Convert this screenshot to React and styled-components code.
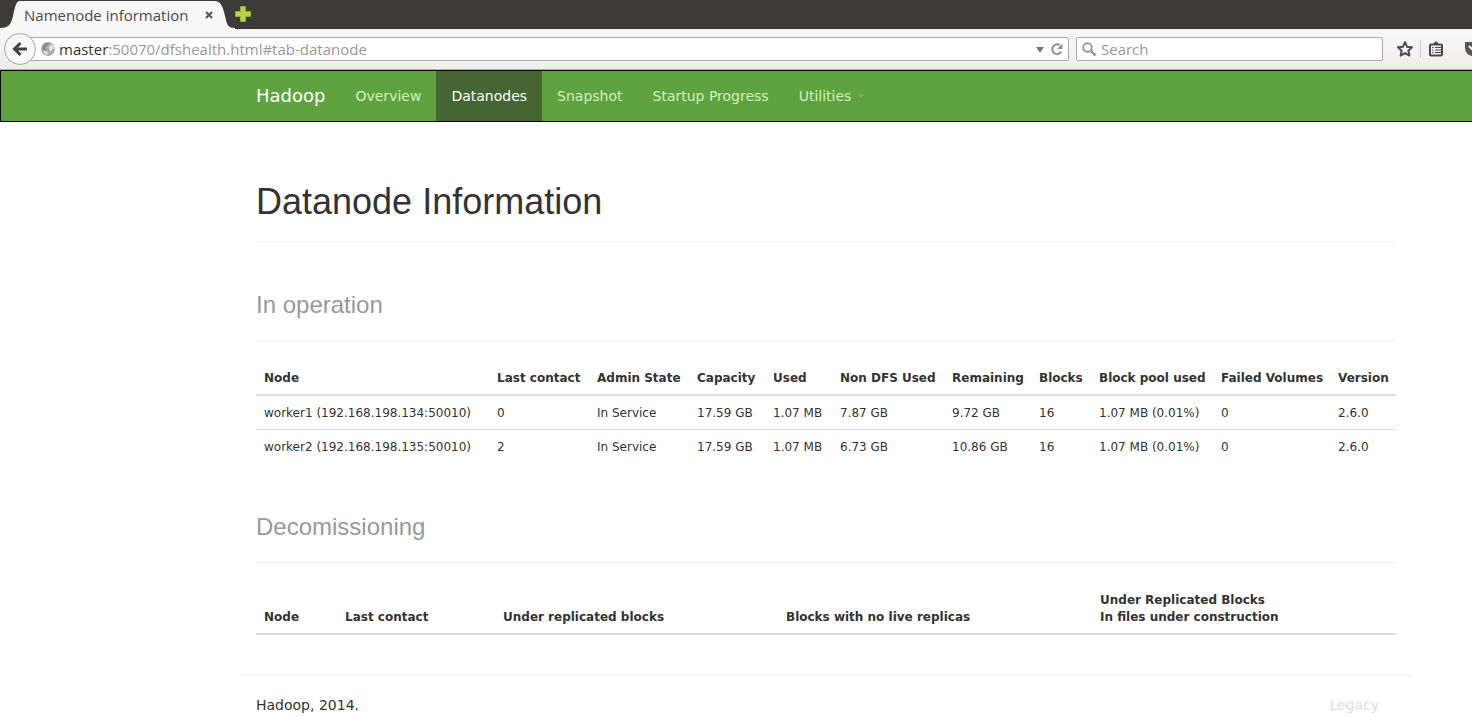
import React from "react";
import styled, { createGlobalStyle } from "styled-components";

const GlobalStyle = createGlobalStyle`
  *, *::before, *::after { box-sizing: border-box; }
  body {
    margin: 0;
    background: #fff;
    color: #333;
    font: 14px/20px "DejaVu Sans", sans-serif;
  }
  button { font: inherit; border: 0; background: none; padding: 0; cursor: pointer; }
  a { text-decoration: none; }
`;

const chromeFont = `"Open Sans", "Noto Sans", sans-serif`;

/* Browser window */
const Chrome = styled.div`
  font-family: ${chromeFont};
  overflow: hidden;
`;

const TabStrip = styled.div`
  display: flex;
  align-items: flex-end;
  height: 29px;
  background: #3c3b37;
  border-bottom: 1px solid #33302c;
`;

const TabEdge = styled.svg`
  flex: none;
  display: block;
  width: 20px;
  height: 29px;
  margin-bottom: -1px;
`;

const Tab = styled.div`
  flex: none;
  display: flex;
  align-items: center;
  justify-content: space-between;
  width: 195px;
  height: 28px;
  margin-bottom: -1px;
  padding-left: 4px;
  background: #f8f7f7;
  color: #4c4c4c;
  font-size: 15px;
  line-height: 28px;
  white-space: nowrap;
`;

const IconButton = styled.button`
  flex: none;
  display: flex;
  align-items: center;
  justify-content: center;
  width: ${(p) => p.$w || 16}px;
  height: ${(p) => p.$h || 16}px;
`;

const NewTab = styled(IconButton)`
  align-self: center;
`;

const Toolbar = styled.div`
  display: flex;
  align-items: center;
  height: 41px;
  padding-left: 4px;
  background: linear-gradient(#f8f7f7, #f0eeed);
  border-bottom: 1px solid #b3afa9;
`;

const BackButton = styled.button`
  position: relative;
  flex: none;
  display: flex;
  align-items: center;
  justify-content: center;
  width: 32px;
  height: 32px;
  border: 1px solid #a5a5a5;
  border-radius: 50%;
  background: #f9f8f8;
`;

const Field = styled.label`
  display: flex;
  align-items: center;
  height: 24px;
  border: 1px solid #aaa;
  border-radius: 2px;
  background: #fff;
`;

const AddressField = styled(Field)`
  flex: 1 1 0;
  margin-left: -8px;
  padding: 0 4px 0 12px;
  gap: 4px;
`;

const SearchField = styled(Field)`
  flex: 0 1 307px;
  margin-left: 7px;
  padding: 0 5px;
  gap: 4px;
`;

const Address = styled.a`
  flex: 1;
  color: #999;
  font-size: 15px;
  line-height: 22px;
  white-space: nowrap;
`;

const Host = styled.span`
  color: #333;
`;

const SearchInput = styled.input`
  flex: 1;
  min-width: 0;
  border: 0;
  padding: 0;
  outline: 0;
  background: none;
  font: 15px/22px ${chromeFont};
  &::placeholder { color: #999; opacity: 1; }
`;

const ToolbarIcons = styled.div`
  flex: none;
  display: flex;
  align-items: center;
  width: 89px;
  padding-left: 13px;
  overflow: hidden;
`;

const Separator = styled.span`
  flex: none;
  width: 1px;
  height: 18px;
  margin: 0 7px 0 6px;
  background: #ccc;
`;

const PocketButton = styled(IconButton)`
  margin-left: 21px;
`;

/* Site navigation */
const Navbar = styled.nav`
  display: flex;
  height: 52px;
  padding-left: 240px;
  border: 1px solid #080808;
  border-right: 0;
  background: #5fa33e;
`;

const Brand = styled.a`
  padding: 15px 15px;
  color: #fff;
  font-size: 18px;
`;

const NavList = styled.ul`
  display: flex;
  margin: 0;
  padding: 0;
  list-style: none;
`;

const NavLink = styled.a`
  display: flex;
  align-items: center;
  gap: 6px;
  height: 50px;
  padding: 0 15px;
  color: ${(p) => (p.$active ? "#fff" : "#d2f0be")};
  background: ${(p) => (p.$active ? "#446633" : "transparent")};
`;

const Caret = styled.span`
  border: 4px solid transparent;
  border-top-color: #8a9c7c;
  border-bottom: 0;
`;

/* Page content */
const Container = styled.div`
  max-width: 1411px;
  padding-left: 241px;
`;

const Main = styled.main`
  padding: 60px 15px 0;
`;

const headingFont = `"Liberation Sans", Arial, sans-serif`;

const headingStyle = `
  margin: 0;
  padding-bottom: 19px;
  border-bottom: 1px solid #eee;
  font: 400 36px/40px ${headingFont};
`;

const PageTitle = styled.h1`
  ${headingStyle}
`;

const SectionTitle = styled.h2`
  ${headingStyle}
  small { color: #999; font-size: 24px; line-height: 1; }
`;

const Section = styled.section`
  margin-top: 39px;
  & + & { margin-top: 40px; }
`;

const Table = styled.table`
  width: 100%;
  margin-top: 20px;
  table-layout: fixed;
  border-spacing: 0;
  font-size: 12px;
  line-height: 17px;
  th, td {
    padding: 9px 8px 7px;
    text-align: left;
    white-space: nowrap;
  }
  th {
    vertical-align: bottom;
    border-bottom: 2px solid #ddd;
  }
  tr + tr td { border-top: 1px solid #ddd; }
`;

const Footer = styled.footer`
  display: flex;
  justify-content: space-between;
  margin-top: 40px;
  padding: 19px 32px 0 15px;
  border-top: 1px solid #eee;
`;

const LegacyLink = styled.a`
  color: #ddd;
`;

const navItems = ["Overview", "Datanodes", "Snapshot", "Startup Progress", "Utilities"];

const operationColumns = [
  ["Node", 233],
  ["Last contact", 100],
  ["Admin State", 100],
  ["Capacity", 76],
  ["Used", 67],
  ["Non DFS Used", 112],
  ["Remaining", 87],
  ["Blocks", 60],
  ["Block pool used", 122],
  ["Failed Volumes", 117],
  ["Version", 66],
];

const operationRows = [
  ["worker1 (192.168.198.134:50010)", "0", "In Service", "17.59 GB", "1.07 MB", "7.87 GB", "9.72 GB", "16", "1.07 MB (0.01%)", "0", "2.6.0"],
  ["worker2 (192.168.198.135:50010)", "2", "In Service", "17.59 GB", "1.07 MB", "6.73 GB", "10.86 GB", "16", "1.07 MB (0.01%)", "0", "2.6.0"],
];

const decommissionColumns = [
  ["Node", 81],
  ["Last contact", 158],
  ["Under replicated blocks", 283],
  ["Blocks with no live replicas", 314],
  [<>Under Replicated Blocks<br />In files under construction</>, 304],
];

function DataTable({ columns, rows = [] }) {
  return (
    <Table>
      <colgroup>
        {columns.map(([, width], i) => <col key={i} width={width} />)}
      </colgroup>
      <thead>
        <tr>{columns.map(([label], i) => <th key={i} scope="col">{label}</th>)}</tr>
      </thead>
      <tbody>
        {rows.map((row) => (
          <tr key={row[0]}>{row.map((cell, i) => <td key={i}>{cell}</td>)}</tr>
        ))}
      </tbody>
    </Table>
  );
}

function BrowserChrome() {
  return (
    <Chrome>
      <TabStrip>
        <TabEdge viewBox="0 0 20 29">
          <path d="M0 29V28C8 28 11 25 13 16C15 7 16 1 20 1V29Z" fill="#f8f7f7" />
        </TabEdge>
        <Tab>
          <span>Namenode information</span>
          <IconButton aria-label="Close tab" $w={12}>
            <svg width="8" height="8" viewBox="0 0 8 8">
              <path d="M1 1L7 7M7 1L1 7" stroke="#555" strokeWidth="2" />
            </svg>
          </IconButton>
        </Tab>
        <TabEdge viewBox="0 0 20 29">
          <path d="M20 29V28C13 28 12 25 10 16C8 6 5 1 0 1V29Z" fill="#f8f7f7" />
        </TabEdge>
        <NewTab aria-label="Open a new tab">
          <svg width="16" height="16" viewBox="0 0 16 16">
            <path d="M5.5 .5H10.500V5.500H15.500V10.500H10.500V15.500H5.500V10.500H.5V5.500H5.500Z" fill="#b5d44c" stroke="#8fb030" />
          </svg>
        </NewTab>
      </TabStrip>
      <Toolbar>
        <BackButton aria-label="Back">
          <svg width="16" height="16" viewBox="0 0 16 16">
            <path d="M8.500 2L2.500 8L8.500 14M3 8H15" fill="none" stroke="#444" strokeWidth="3" />
          </svg>
        </BackButton>
        <AddressField as="div">
          <svg width="14" height="14" viewBox="0 0 14 14">
            <circle cx="7" cy="7" r="7" fill="#ababab" />
            <path d="M1 5L4 1L8 1L6 4L4 5L6 8L5 9L2 8Z" fill="#8d8d8d" />
            <path d="M8 4L12 2.500L13.500 7L11 7L10 10L8 7Z" fill="#e4e4e4" />
            <path d="M2 9L6 9L7 12L5 13Z" fill="#e0e0e0" />
          </svg>
          <Address href="#tab-datanode"><Host>master</Host>:50070/dfshealth.html#tab-datanode</Address>
          <IconButton aria-label="Show history" $w={12}>
            <svg width="8" height="8" viewBox="0 0 8 8"><path d="M0 2H8L4 8Z" fill="#777" /></svg>
          </IconButton>
          <IconButton aria-label="Reload" $w={14}>
            <svg width="12" height="12" viewBox="0 0 12 12">
              <path d="M10.300 8.500A4.800 4.800 0 1 1 8.800 2.200" fill="none" stroke="#8494a0" strokeWidth="2" />
              <path d="M11.500 .5V6H6Z" fill="#8494a0" />
            </svg>
          </IconButton>
        </AddressField>
        <SearchField>
          <svg width="15" height="15" viewBox="0 0 15 15">
            <circle cx="5.500" cy="5.500" r="4.300" fill="none" stroke="#999" strokeWidth="2" />
            <path d="M9 9L13.500 13.500" stroke="#999" strokeWidth="2.500" />
          </svg>
          <SearchInput type="search" placeholder="Search" aria-label="Search" />
        </SearchField>
        <ToolbarIcons>
          <IconButton aria-label="Bookmark this page" $w={18}>
            <svg width="18" height="18" viewBox="0 0 18 18">
              <path d="M9 2.200L11.100 6.800L16 7.300L12.400 10.700L13.400 15.600L9 13.100L4.600 15.600L5.600 10.700L2 7.300L6.900 6.800Z" fill="none" stroke="#4a4a4a" strokeWidth="2" strokeLinejoin="round" />
            </svg>
          </IconButton>
          <Separator />
          <IconButton aria-label="Show bookmarks">
            <svg width="16" height="16" viewBox="0 0 16 16">
              <rect x="2" y="3.500" width="12" height="11" rx="1" fill="none" stroke="#4a4a4a" strokeWidth="2" />
              <path d="M5 3L8 0L11 3Z" fill="#4a4a4a" />
              <path d="M4 6.500H5.500M7 6.500H13M4 9H5.500M7 9H13M4 11.500H5.500M7 11.500H13" stroke="#4a4a4a" />
            </svg>
          </IconButton>
          <PocketButton aria-label="Save to Pocket">
            <svg width="16" height="16" viewBox="0 0 16 16">
              <path d="M0 2Q0 1 1 1H15Q16 1 16 2V7A8 8 0 0 1 0 7Z" fill="#555" />
              <path d="M4 5L8 9L12 5" fill="none" stroke="#fff" strokeWidth="2" />
            </svg>
          </PocketButton>
        </ToolbarIcons>
      </Toolbar>
    </Chrome>
  );
}

export default function App() {
  return (
    <>
      <GlobalStyle />
      <BrowserChrome />
      <Navbar>
        <Brand href="#">Hadoop</Brand>
        <NavList>
          {navItems.map((item) => (
            <li key={item}>
              <NavLink href="#" $active={item === "Datanodes"}>
                {item}
                {item === "Utilities" && <Caret />}
              </NavLink>
            </li>
          ))}
        </NavList>
      </Navbar>
      <Container>
        <Main>
          <PageTitle>Datanode Information</PageTitle>
          <Section>
            <SectionTitle><small>In operation</small></SectionTitle>
            <DataTable columns={operationColumns} rows={operationRows} />
          </Section>
          <Section>
            <SectionTitle><small>Decomissioning</small></SectionTitle>
            <DataTable columns={decommissionColumns} />
          </Section>
        </Main>
        <Footer>
          <span>Hadoop, 2014.</span>
          <LegacyLink href="#">Legacy</LegacyLink>
        </Footer>
      </Container>
    </>
  );
}
